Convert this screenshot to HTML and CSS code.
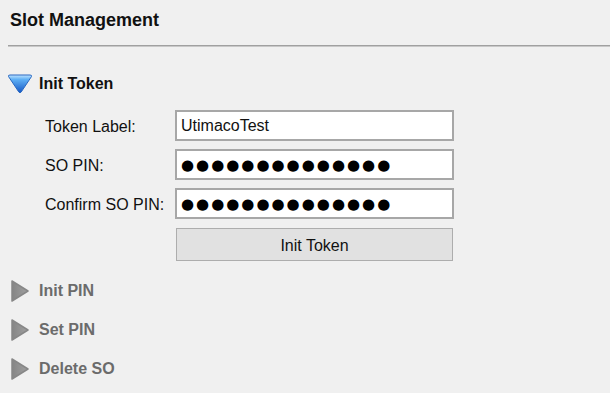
FILE: index.html
```html
<!DOCTYPE html>
<html>
<head>
<meta charset="utf-8">
<link rel="stylesheet" href="styles.css">
</head>
<body>
<div class="panel">
  <h1 class="title">Slot Management</h1>
  <div class="rule"></div>

  <div class="section open">
    <div class="section-head">
      <svg class="icon-open" width="26" height="20" viewBox="0 0 26 20">
        <defs>
          <linearGradient id="bg" x1="0" y1="0" x2="0" y2="1">
            <stop offset="0" stop-color="#bfe3ff"/>
            <stop offset="0.25" stop-color="#5fb0f5"/>
            <stop offset="1" stop-color="#1657c4"/>
          </linearGradient>
        </defs>
        <path d="M1.5 2.5 Q1 1 3 1 H23 Q25 1 24.5 2.5 L14.2 18 Q13 19.6 11.8 18 Z" fill="url(#bg)" stroke="#2a69c2" stroke-width="1"/>
      </svg>
      <span class="section-title">Init Token</span>
    </div>

    <div class="form">
      <label class="label">Token Label:</label>
      <div class="field">UtimacoTest</div>
      <label class="label">SO PIN:</label>
      <div class="field dots">●●●●●●●●●●●●●●</div>
      <label class="label">Confirm SO PIN:</label>
      <div class="field dots">●●●●●●●●●●●●●●</div>
      <div class="spacer"></div>
      <button class="btn">Init Token</button>
    </div>
  </div>

  <div class="section closed">
    <div class="section-head">
      <svg class="icon-closed" width="20" height="24" viewBox="0 0 20 24">
        <defs>
          <linearGradient id="gg" x1="0" y1="0" x2="1" y2="0">
            <stop offset="0" stop-color="#858585"/>
            <stop offset="1" stop-color="#a0a0a0"/>
          </linearGradient>
        </defs>
        <path d="M2 2 L18 12 L2 22 Z" fill="url(#gg)" stroke="#878787" stroke-width="1.5" stroke-linejoin="round"/>
      </svg>
      <span class="section-title muted">Init PIN</span>
    </div>
  </div>

  <div class="section closed">
    <div class="section-head">
      <svg class="icon-closed" width="20" height="24" viewBox="0 0 20 24">
        <path d="M2 2 L18 12 L2 22 Z" fill="url(#gg)" stroke="#878787" stroke-width="1.5" stroke-linejoin="round"/>
      </svg>
      <span class="section-title muted">Set PIN</span>
    </div>
  </div>

  <div class="section closed">
    <div class="section-head">
      <svg class="icon-closed" width="20" height="24" viewBox="0 0 20 24">
        <path d="M2 2 L18 12 L2 22 Z" fill="url(#gg)" stroke="#878787" stroke-width="1.5" stroke-linejoin="round"/>
      </svg>
      <span class="section-title muted">Delete SO</span>
    </div>
  </div>
</div>
</body>
</html>
```

FILE: styles.css
```css
html, body {
  margin: 0;
  padding: 0;
  background: #f0f0f0;
}
body {
  width: 610px;
  height: 393px;
  overflow: hidden;
  font-family: "Liberation Sans", Arial, sans-serif;
  color: #000;
}
.panel {
  display: flex;
  flex-direction: column;
}
.title {
  margin: 9px 0 0 10px;
  font-size: 18px;
  line-height: 22px;
  font-weight: bold;
  color: #111;
}
.rule {
  margin: 14px 0 0 8px;
  border-top: 1px solid #a0a0a0;
  border-bottom: 1px solid #c8c8c8;
}
.section-head {
  display: flex;
  align-items: center;
  height: 24px;
  padding-left: 7px;
  gap: 6px;
}
.section.open {
  margin-top: 25px;
}
.section.closed {
  margin-top: 15px;
}
.section.open + .section.closed {
  margin-top: 18px;
}
.section.closed .section-head {
  padding-left: 10px;
  gap: 9px;
}
.section-title {
  font-size: 16px;
  font-weight: bold;
  color: #111;
}
.section-title.muted {
  color: #6b6b6b;
}
.form {
  display: grid;
  grid-template-columns: 130px 279px;
  column-gap: 0;
  row-gap: 8px;
  margin: 14px 0 0 45px;
  align-items: center;
}
.label {
  font-size: 16px;
  color: #111;
  padding-top: 3px;
}
.field {
  box-sizing: border-box;
  height: 31px;
  border: 2px solid #a7a7a7;
  background: #fff;
  padding: 0 4px;
  font-size: 16px;
  line-height: 28px;
  color: #111;
  white-space: nowrap;
  overflow: hidden;
}
.dots {
  font-family: "DejaVu Sans", sans-serif;
  font-size: 15px;
  letter-spacing: 2px;
  color: #000;
}
.btn {
  box-sizing: border-box;
  height: 33px;
  margin: 1px 1px 0 1px;
  border: 1px solid #adadad;
  background: #e1e1e1;
  font-family: "Liberation Sans", Arial, sans-serif;
  font-size: 16px;
  color: #111;
  padding: 2px 0 0 0;
}
```
